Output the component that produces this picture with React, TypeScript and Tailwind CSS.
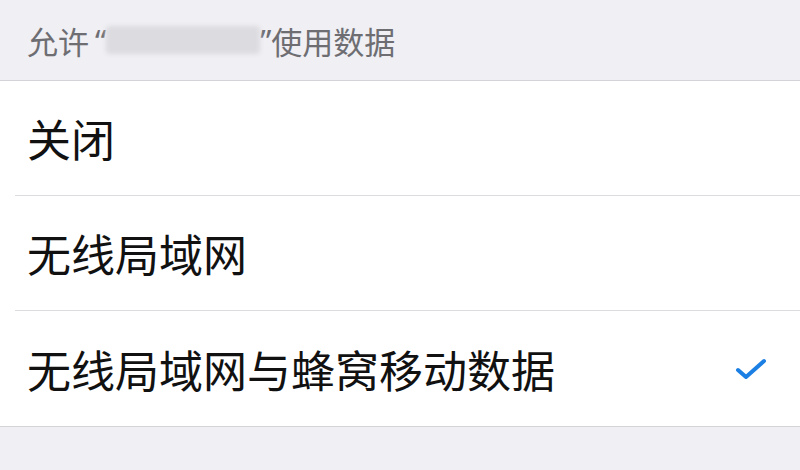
import React from 'react';

const options = ['关闭', '无线局域网', '无线局域网与蜂窝移动数据'];

export default function App() {
  const selected = 2;

  return (
    <div
      className="w-[800px] h-[470px] bg-[#efeff4] overflow-hidden"
      style={{ fontFamily: '"Noto Sans CJK SC", "Noto Sans", sans-serif' }}
    >
      {/* 分组标题 */}
      <div className="h-[80px] flex items-center pl-[27px] text-[31px] text-[#6d6d72] leading-none">
        <span>允许</span>
        <span className="font-['Noto_Sans'] pl-[6px]">“</span>
        <span className="w-[154px] h-[28px] bg-[#dcdce0] rounded-sm blur-[2px]" />
        <span className="font-['Noto_Sans']">”</span>
        <span>使用数据</span>
      </div>

      <div className="bg-white border-t border-b border-[#d4d4d8]">
        {options.map((label, idx) => (
          <div key={label} className="pl-[15px]">
            <div
              className={
                idx < options.length - 1
                  ? 'h-[115px] flex items-center justify-between pl-[12px] pr-[33px] border-b border-[#dcdce0]'
                  : 'h-[115px] flex items-center justify-between pl-[12px] pr-[33px]'
              }
            >
              <span className="text-[44px] leading-none text-[#111]">{label}</span>
              {idx === selected && (
                <svg width="32" height="24" viewBox="0 0 32 24" fill="none">
                  <path
                    d="M3 13 L11 20 L29 4"
                    stroke="#1b7fe3"
                    strokeWidth="4"
                    strokeLinecap="round"
                    strokeLinejoin="round"
                  />
                </svg>
              )}
            </div>
          </div>
        ))}
      </div>
    </div>
  );
}
